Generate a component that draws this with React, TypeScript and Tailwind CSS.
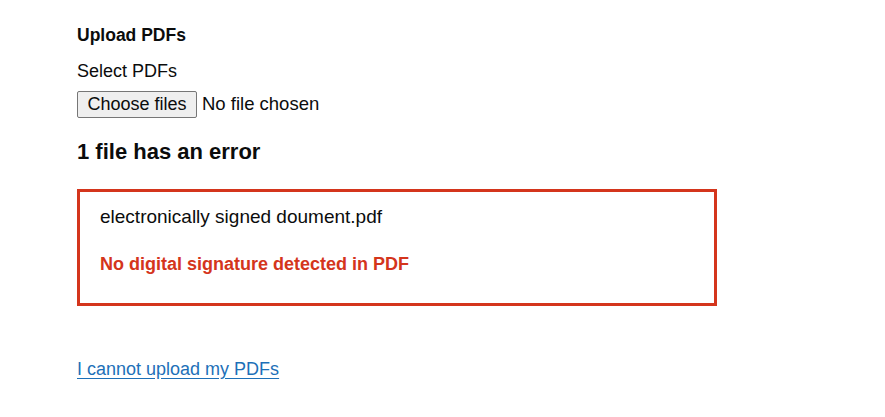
export default function App() {
  return (
    <div className="min-h-screen bg-white text-[#0b0c0c]" style={{ fontFamily: '"Liberation Sans", Arial, sans-serif' }}>
      <div className="pl-[77px] pt-[25px] w-[717px]">
        <h2 className="text-[17.5px] font-bold leading-[20px] mb-[14px]">Upload PDFs</h2>
        <label className="block text-[18px] leading-[25px] mb-[6px]">Select PDFs</label>
        <div className="flex items-center gap-[5px] h-[28px]">
          <button className="h-[27px] w-[120px] text-[18px] leading-[20px] bg-[#efefef] border border-[#767676] rounded-[2px]">
            Choose files
          </button>
          <span className="text-[18.5px]">No file chosen</span>
        </div>
        <h2 className="text-[22px] font-bold leading-[30px] mt-[19px]">1 file has an error</h2>
        <div className="mt-[22px] h-[117px] border-[3px] border-[#d4351c] px-[20px] pt-[12px]">
          <p className="text-[19px] leading-[25px]">electronically signed doument.pdf</p>
          <p className="text-[18px] leading-[25px] font-bold text-[#d4351c] mt-[23px]">No digital signature detected in PDF</p>
        </div>
        <a href="#" className="inline-block mt-[51px] text-[18px] leading-[25px] text-[#1d70b8] underline underline-offset-[3px]">
          I cannot upload my PDFs
        </a>
      </div>
    </div>
  )
}
